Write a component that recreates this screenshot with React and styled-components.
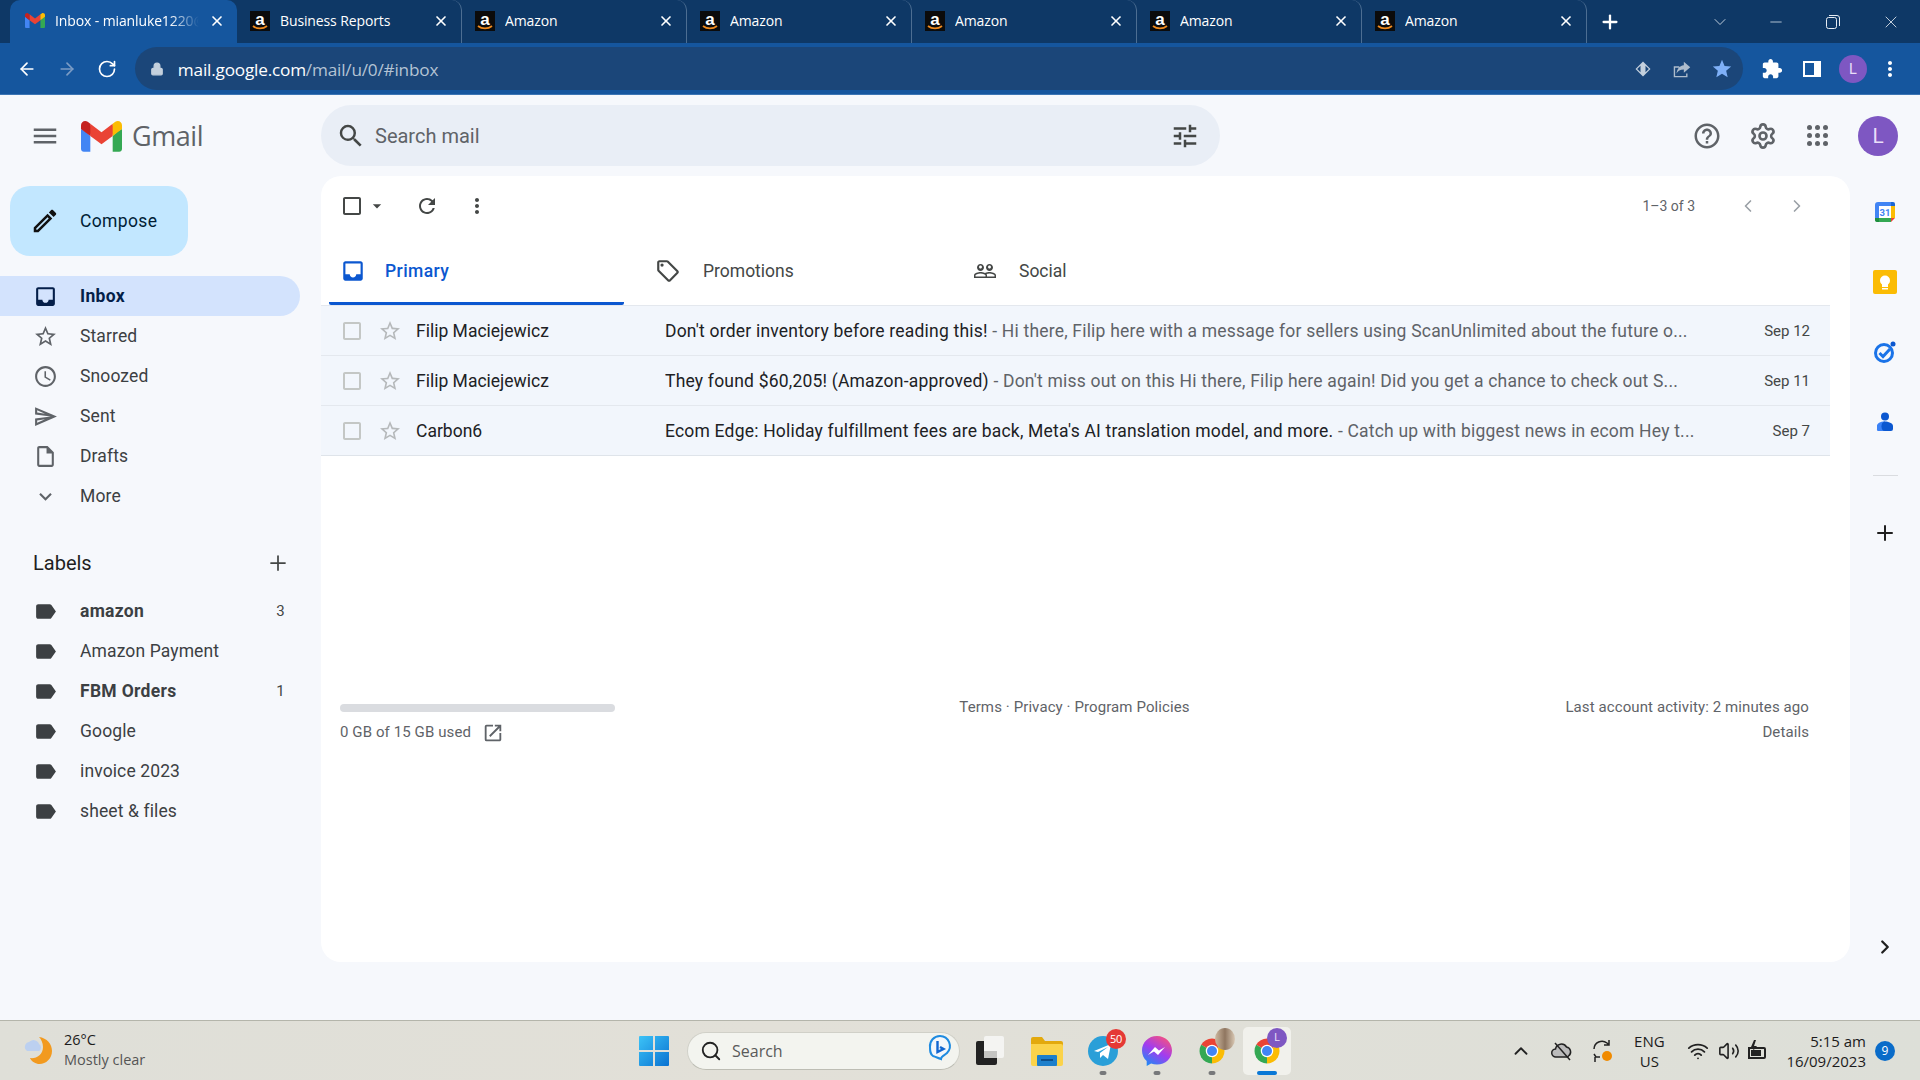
import React from 'react';
import styled, { createGlobalStyle } from 'styled-components';
import { Settings, ChevronLeft, ChevronRight, Plus, X, ArrowLeft, ArrowRight, RotateCw, Lock, Minus, ChevronDown, ChevronUp, Wifi, Volume2, Search as SearchGlyph } from 'lucide-react';

const GlobalStyle = createGlobalStyle`
  html, body { margin: 0; padding: 0; background: #f6f8fc; }
  body { font-family: Roboto, "Liberation Sans", sans-serif; }
  * { box-sizing: border-box; }
`;

const paths = {
  menu: 'M3 18h18v-2H3v2zm0-5h18v-2H3v2zm0-7v2h18V6H3z',
  search: 'M15.5 14h-.79l-.28-.27A6.471 6.471 0 0 0 16 9.5 6.5 6.5 0 1 0 9.5 16c1.61 0 3.09-.59 4.23-1.57l.27.28v.79l5 4.99L20.49 19l-4.99-5zm-6 0C7.01 14 5 11.99 5 9.5S7.01 5 9.5 5 14 7.01 14 9.5 11.99 14 9.5 14z',
  tune: 'M3 17v2h6v-2H3zM3 5v2h10V5H3zm10 16v-2h8v-2h-8v-2h-2v6h2zM7 9v2H3v2h4v2h2V9H7zm14 4v-2H11v2h10zm-6-4h2V7h4V5h-4V3h-2v6z',
  help: 'M11 18h2v-2h-2v2zm1-16C6.48 2 2 6.48 2 12s4.48 10 10 10 10-4.48 10-10S17.52 2 12 2zm0 18c-4.41 0-8-3.59-8-8s3.59-8 8-8 8 3.59 8 8-3.59 8-8 8zm0-14c-2.21 0-4 1.79-4 4h2c0-1.1.9-2 2-2s2 .9 2 2c0 2-3 1.75-3 5h2c0-2.25 3-2.5 3-5 0-2.21-1.79-4-4-4z',
  star: 'M22 9.24l-7.19-.62L12 2 9.19 8.63 2 9.24l5.46 4.73L5.82 21 12 17.27 18.18 21l-1.63-7.03L22 9.24zM12 15.4l-3.76 2.27 1-4.28-3.32-2.88 4.38-.38L12 6.1l1.71 4.04 4.38.38-3.32 2.88 1 4.28L12 15.4z',
  starFill: 'M12 17.27 18.18 21l-1.64-7.03L22 9.24l-7.19-.61L12 2 9.19 8.63 2 9.24l5.46 4.73L5.82 21z',
  clock: 'M11.99 2C6.47 2 2 6.48 2 12s4.47 10 9.99 10C17.52 22 22 17.52 22 12S17.52 2 11.99 2zM12 20c-4.42 0-8-3.58-8-8s3.58-8 8-8 8 3.58 8 8-3.58 8-8 8zm.5-13H11v6l5.25 3.15.75-1.23-4.5-2.67z',
  send: 'M4.01 6.03l7.51 3.22-7.52-1 .01-2.22m7.5 8.72L4 17.97v-2.22l7.51-1M2.01 3L2 10l15 2-15 2 .01 7L23 12 2.01 3z',
  draft: 'M14 2H6c-1.1 0-1.99.9-1.99 2L4 20c0 1.1.89 2 1.99 2H18c1.1 0 2-.9 2-2V8l-6-6zm4 18H6V4h7v5h5v11z',
  expand: 'M16.59 8.59L12 13.17 7.41 8.59 6 10l6 6 6-6z',
  inbox: 'M19 3H5c-1.1 0-2 .9-2 2v14c0 1.1.9 2 2 2h14c1.1 0 2-.9 2-2V5c0-1.1-.9-2-2-2zm0 12h-4c0 1.66-1.34 3-3 3s-3-1.34-3-3H5V5h14v10z',
  label: 'M17.63 5.84C17.27 5.33 16.67 5 16 5L5 5.01C3.9 5.01 3 5.9 3 7v10c0 1.1.9 1.99 2 1.99L16 19c.67 0 1.27-.33 1.63-.84L22 12l-4.37-6.16z',
  tag: 'M21.41 11.58l-9-9C12.05 2.22 11.55 2 11 2H4c-1.1 0-2 .9-2 2v7c0 .55.22 1.05.59 1.42l9 9c.36.36.86.58 1.41.58.55 0 1.05-.22 1.41-.59l7-7c.37-.36.59-.86.59-1.41 0-.55-.23-1.06-.59-1.42zM13 20.01L4 11V4h7v-.01l9 9-7 7.02zM6.5 5A1.5 1.5 0 1 0 6.5 8 1.5 1.5 0 1 0 6.5 5z',
  people: 'M16.5 13c-1.2 0-3.07.34-4.5 1-1.43-.67-3.3-1-4.5-1C5.33 13 1 14.08 1 16.25V19h22v-2.75c0-2.17-4.33-3.25-6.5-3.25zm-4 4.5h-10v-1.25c0-.54 2.56-1.75 5-1.75s5 1.21 5 1.75v1.25zm9 0H14v-1.25c0-.46-.2-.86-.52-1.22.88-.3 1.96-.53 3.02-.53 2.44 0 5 1.21 5 1.75v1.25zM7.5 12c1.93 0 3.5-1.57 3.5-3.5S9.43 5 7.5 5 4 6.57 4 8.5 5.57 12 7.5 12zm0-5.5c.83 0 1.5.67 1.5 1.5s-.67 1.5-1.5 1.5S6 8.83 6 8s.67-1.5 1.5-1.5zm9 5.5c1.93 0 3.5-1.57 3.5-3.5S18.43 5 16.5 5 13 6.57 13 8.5s1.57 3.5 3.5 3.5zm0-5.5c.83 0 1.5.67 1.5 1.5s-.67 1.5-1.5 1.5S15 8.83 15 8s.67-1.5 1.5-1.5z',
  refresh: 'M17.65 6.35A7.958 7.958 0 0 0 12 4c-4.42 0-7.99 3.58-7.99 8s3.57 8 7.99 8c3.73 0 6.84-2.55 7.73-6h-2.08A5.99 5.99 0 0 1 12 18c-3.31 0-6-2.69-6-6s2.69-6 6-6c1.66 0 3.14.69 4.22 1.78L13 11h7V4l-2.35 2.35z',
  more: 'M12 8c1.1 0 2-.9 2-2s-.9-2-2-2-2 .9-2 2 .9 2 2 2zm0 2c-1.1 0-2 .9-2 2s.9 2 2 2 2-.9 2-2-.9-2-2-2zm0 6c-1.1 0-2 .9-2 2s.9 2 2 2 2-.9 2-2-.9-2-2-2z',
  pencil: 'M14.06 9.02l.92.92L5.92 19H5v-.92l9.06-9.06M17.66 3c-.25 0-.51.1-.7.29l-1.83 1.83 3.75 3.75 1.83-1.83c.39-.39.39-1.02 0-1.41l-2.34-2.34c-.2-.2-.45-.29-.71-.29zm-3.6 3.19L3 17.25V21h3.75L17.81 9.94l-3.75-3.75z',
  open: 'M19 19H5V5h7V3H5a2 2 0 0 0-2 2v14a2 2 0 0 0 2 2h14c1.1 0 2-.9 2-2v-7h-2v7zM14 3v2h3.59l-9.83 9.83 1.41 1.41L19 6.41V10h2V3h-7z',
  puzzle: 'M20.5 11H19V7c0-1.1-.9-2-2-2h-4V3.5C13 2.12 11.88 1 10.5 1S8 2.12 8 3.5V5H4c-1.1 0-1.99.9-1.99 2v3.8H3.5c1.49 0 2.7 1.21 2.7 2.7s-1.21 2.7-2.7 2.7H2V20c0 1.1.9 2 2 2h3.8v-1.5c0-1.49 1.21-2.7 2.7-2.7 1.49 0 2.7 1.21 2.7 2.7V22H17c1.1 0 2-.9 2-2v-4h1.5c1.38 0 2.5-1.12 2.5-2.5S21.88 11 20.5 11z',
  box: 'M19 5v14H5V5h14m0-2H5c-1.1 0-2 .9-2 2v14c0 1.1.9 2 2 2h14c1.1 0 2-.9 2-2V5c0-1.1-.9-2-2-2z',
  caret: 'M7 10l5 5 5-5z',
  share: 'M14 4l7 6-7 6v-3.500c-4 0-6.500 1.500-8 4.500.5-4.500 3-8.500 8-9zM3 9h6v1.500H4.500v9h12V17H18v4H3z',
};

const Svg = styled.svg`
  display: block;
  flex: none;
  width: ${p => p.$size || 24}px;
  height: ${p => p.$size || 24}px;
  fill: ${p => p.$color || '#444746'};
`;

const Icon = ({ name, size, color }) => (
  <Svg viewBox="0 0 24 24" $size={size} $color={color}><path d={paths[name]} /></Svg>
);

const Page = styled.div`
  width: 1920px;
  height: 1080px;
  overflow: hidden;
  display: flex;
  flex-direction: column;
  background: #f6f8fc;
`;

/* browser chrome */
const TabStrip = styled.div`
  height: 43px;
  background: #0e3866;
  display: flex;
  align-items: stretch;
  padding-left: 10px;
  flex: none;
`;
const Tab = styled.div`
  width: ${p => (p.$active ? '227px' : '225px')};
  padding: 0 12px 2px ${p => (p.$active ? '15px' : '13px')};
  display: flex;
  align-items: center;
  gap: 10px;
  color: #fff;
  font-family: "Open Sans", Roboto, sans-serif;
  font-size: 14px;
  position: relative;
  border-radius: 10px 10px 0 0;
  background: ${p => (p.$active ? '#15569e' : 'transparent')};
  border-right: ${p => (p.$sep ? '1px solid #4d6e92' : 'none')};
`;
const TabTitle = styled.span`
  flex: 1;
  white-space: nowrap;
  overflow: hidden;
  letter-spacing: -0.12px;
  -webkit-mask-image: ${p => (p.$fade ? 'linear-gradient(90deg, #000 80%, transparent)' : 'none')};
`;
const NewTab = styled.div`
  margin-left: 12px;
  display: flex;
  align-items: center;
`;
const WindowControls = styled.div`
  margin-left: auto;
  display: flex;
  align-items: center;
  gap: 40px;
  padding-right: 19px;
  color: #e6ecf3;
`;
const CaretGap = styled.div`
  margin-right: -3px;
  display: flex;
`;

const Toolbar = styled.div`
  height: 52px;
  background: #15569e;
  border-bottom: 1px solid #3c75b4;
  display: flex;
  align-items: center;
  padding: 0 18px 0 17px;
  flex: none;
`;
const NavButtons = styled.div`
  display: flex;
  align-items: center;
  gap: 20px;
  width: 118px;
`;
const Omnibox = styled.div`
  width: 1610px;
  height: 43px;
  border-radius: 22px;
  background: #1b4679;
  display: flex;
  align-items: center;
  padding: 0 10px 0 15px;
  font-family: "Open Sans", Roboto, sans-serif;
  font-size: 17.2px;
  letter-spacing: -0.2px;
`;
const Host = styled.span`
  color: #fff;
  margin-left: 14px;
  padding-top: 2px;
`;
const Path = styled.span`
  color: #b4c3d4;
`;
const OmniIcons = styled.div`
  margin-left: auto;
  display: flex;
  align-items: center;
  gap: 18px;
`;
const ToolIcons = styled.div`
  margin-left: 18px;
  display: flex;
  align-items: center;
  gap: 19px;
`;
const ToolAvatar = styled.div`
  margin-left: -2px;
`;
const ToolMore = styled.div`
  margin-left: -8px;
`;
const Avatar = styled.div`
  width: ${p => p.$size}px;
  height: ${p => p.$size}px;
  border-radius: 50%;
  background: #7e57c2;
  color: #e9def9;
  display: flex;
  align-items: center;
  justify-content: center;
  font-size: ${p => p.$size * 0.52}px;
  font-family: Roboto, sans-serif;
  flex: none;
`;

/* gmail header */
const Topbar = styled.div`
  height: 81px;
  display: flex;
  align-items: center;
  flex: none;
`;
const Brand = styled.div`
  width: 321px;
  display: flex;
  align-items: center;
  padding-left: 30px;
  flex: none;
`;
const GmailLogoWrap = styled.div`
  margin-left: 21px;
  padding-top: 2px;
`;
const GmailText = styled.span`
  font-family: "Open Sans", Roboto, sans-serif;
  font-size: 27px;
  letter-spacing: -0.45px;
  color: #5f6368;
  margin-left: 10px;
`;
const SearchBar = styled.div`
  width: 899px;
  height: 61px;
  border-radius: 31px;
  background: #e9eef6;
  display: flex;
  align-items: center;
  padding: 0 20px 0 15px;
  font-size: 20px;
  color: #5f6368;
  gap: 9px;
`;
const TuneWrap = styled.div`
  margin-left: auto;
`;
const HeaderActions = styled.div`
  margin-left: auto;
  padding-right: 22px;
  display: flex;
  align-items: center;
  gap: 27px;
`;
const AvatarGap = styled.div`
  margin-left: 0;
`;
const AppsGrid = styled.div`
  display: grid;
  grid-template-columns: repeat(3, 5px);
  gap: 3px;
  padding: 0 3px;
`;
const AppsDot = styled.div`
  width: 5px;
  height: 5px;
  border-radius: 50%;
  background: #5f6368;
`;

const Body = styled.div`
  flex: 1;
  display: flex;
  min-height: 0;
`;

/* sidebar */
const Sidebar = styled.div`
  width: 321px;
  flex: none;
  padding-top: 10px;
`;
const Compose = styled.div`
  width: 178px;
  height: 70px;
  margin-left: 10px;
  border-radius: 20px;
  background: #c2e7ff;
  display: flex;
  align-items: center;
  padding-left: 20px;
  gap: 20px;
  color: #001d35;
  font-size: 17.5px;
  letter-spacing: 0.35px;
`;
const Nav = styled.div`
  margin-top: 20px;
`;
const NavRow = styled.div`
  width: 300px;
  height: 40px;
  border-radius: 0 20px 20px 0;
  background: ${p => (p.$active ? '#d3e3fd' : 'transparent')};
  color: ${p => (p.$active ? '#041e49' : '#3c4043')};
  font-weight: ${p => (p.$bold ? 700 : 400)};
  font-size: 17.5px;
  letter-spacing: ${p => (p.$bold ? '0.3px' : '0.12px')};
  display: flex;
  align-items: center;
  padding: 0 15px 0 33px;
  gap: 22px;
`;
const Count = styled.span`
  margin-left: auto;
  font-size: 15px;
  font-weight: 400;
  color: #444746;
`;
const LabelsHead = styled.div`
  width: 300px;
  margin-top: 27px;
  height: 40px;
  padding: 0 10px 0 33px;
  display: flex;
  align-items: center;
  justify-content: space-between;
  font-size: 20px;
  color: #1f1f1f;
`;
const LabelList = styled.div`
  margin-top: 8px;
`;

/* mail panel */
const Panel = styled.div`
  width: 1529px;
  height: 786px;
  background: #fff;
  border-radius: 20px;
  flex: none;
  display: flex;
  flex-direction: column;
`;
const ListToolbar = styled.div`
  height: 60px;
  flex: none;
  display: flex;
  align-items: center;
  padding: 0 43px 0 19px;
`;
const Caret = styled.div`
  margin-left: 3px;
`;
const RefreshWrap = styled.div`
  margin-left: 28px;
`;
const MoreWrap = styled.div`
  margin-left: 26px;
`;
const Pager = styled.div`
  margin-left: auto;
  display: flex;
  align-items: center;
  font-size: 14px;
  color: #5f6368;
  gap: 43px;
`;
const PagerArrows = styled.div`
  display: flex;
  gap: 29px;
`;
const Tabs = styled.div`
  height: 69px;
  flex: none;
  display: flex;
  padding-left: 8px;
  gap: 18px;
`;
const CategoryTab = styled.div`
  width: ${p => p.$w || 295}px;
  padding: 4px 0 0 ${p => (p.$active ? '11px' : '13px')};
  display: flex;
  align-items: center;
  gap: ${p => (p.$active ? '19px' : '22px')};
  font-size: 17.5px;
  font-weight: ${p => (p.$active ? 500 : 400)};
  letter-spacing: ${p => (p.$active ? '0.4px' : '0')};
  color: ${p => (p.$active ? '#0b57d0' : '#444746')};
  border-bottom: 3px solid ${p => (p.$active ? '#0b57d0' : 'transparent')};
  border-radius: 0 0 2px 2px;
`;
const MailList = styled.div`
  width: 1509px;
  flex: none;
`;
const MailRow = styled.div`
  height: ${p => (p.$last ? '51px' : '50px')};
  background: #f2f6fc;
  border-top: 1px solid #e4e8ee;
  border-bottom: ${p => (p.$last ? '1px solid #dfe4ea' : 'none')};
  display: flex;
  align-items: center;
  padding: 0 20px 0 19px;
  font-size: 17.5px;
  color: #202124;
`;
const StarWrap = styled.div`
  margin-left: 14px;
`;
const Sender = styled.div`
  width: 249px;
  margin-left: 14px;
  flex: none;
`;
const Preview = styled.div`
  width: 1040px;
  white-space: nowrap;
  overflow: hidden;
  flex: none;
  color: #5f6368;
  letter-spacing: 0.2px;
`;
const Subject = styled.span`
  color: #202124;
`;
const MailDate = styled.div`
  margin-left: auto;
  font-size: 15px;
  color: #444746;
`;
const Footer = styled.div`
  margin-top: 239px;
  display: grid;
  grid-template-columns: 1fr auto 1fr;
  padding: 0 41px 0 19px;
  width: 1529px;
  font-size: 15px;
  line-height: 25px;
  letter-spacing: 0.1px;
  color: #5f6368;
`;
const StorageBar = styled.div`
  width: 275px;
  height: 8px;
  border-radius: 4px;
  background: #dadce0;
  margin: 9px 0 8px;
`;
const StorageText = styled.div`
  display: flex;
  align-items: center;
  gap: 11px;
`;
const FooterRight = styled.div`
  text-align: right;
`;
const FooterLinks = styled.div`
  margin-left: 0;
`;

/* add-on rail */
const Rail = styled.div`
  width: 70px;
  flex: none;
  display: flex;
  flex-direction: column;
  align-items: center;
  padding-top: 24px;
`;
const RailItem = styled.div`
  width: 24px;
  height: 24px;
  margin-bottom: 46px;
`;
const RailRule = styled.div`
  width: 25px;
  height: 1px;
  background: #dadce0;
  margin: -5px 0 45px;
`;
const RailChevron = styled.div`
  margin-top: 391px;
`;

/* taskbar */
const Taskbar = styled.div`
  height: 60px;
  flex: none;
  border-top: 1px solid #b4b5ab;
  background: linear-gradient(100deg, #dfdfd8, #e2e0d8 40%, #dddfd8);
  display: flex;
  align-items: center;
  font-family: "Open Sans", Roboto, sans-serif;
  color: #1c1c1c;
`;
const Weather = styled.div`
  width: 639px;
  padding: 0 0 2px 24px;
  display: flex;
  align-items: center;
  gap: 10px;
  flex: none;
  font-size: 14.5px;
  line-height: 20px;
`;
const WeatherSub = styled.div`
  color: #555;
`;
const TaskSearch = styled.div`
  width: 273px;
  height: 38px;
  margin-left: 18px;
  border-radius: 19px;
  background: #f3f4ef;
  border: 1px solid #d0d0c8;
  border-bottom-color: #bdbdb4;
  display: flex;
  align-items: center;
  padding: 0 6px 0 12px;
  gap: 10px;
  font-size: 16px;
  color: #5a5a5a;
`;
const BingWrap = styled.div`
  margin-left: auto;
`;
const TaskIcons = styled.div`
  margin-left: 2px;
  display: flex;
  align-items: center;
`;
const TaskItem = styled.div`
  width: ${p => p.$w || 55}px;
  height: 48px;
  margin-left: ${p => (p.$active ? '4px' : '0')};
  display: flex;
  align-items: center;
  justify-content: center;
  position: relative;
  border-radius: 5px;
  background: ${p => (p.$active ? '#f1f1ec' : 'transparent')};
`;
const RunDot = styled.div`
  position: absolute;
  bottom: 0;
  left: 50%;
  transform: translateX(-50%);
  width: ${p => (p.$active ? '20px' : '7px')};
  height: 4px;
  border-radius: 2px;
  background: ${p => (p.$active ? '#0a78d6' : '#77787a')};
`;
const Badge = styled.div`
  position: absolute;
  top: 2px;
  right: 4px;
  width: 20px;
  height: 20px;
  border-radius: 50%;
  background: #e53935;
  color: #fff;
  font-size: 11px;
  display: flex;
  align-items: center;
  justify-content: center;
  letter-spacing: -0.4px;
`;
const CornerAvatar = styled.div`
  position: absolute;
  top: 1px;
  right: 4px;
`;
const FaceDot = styled.div`
  width: 20px;
  height: 22px;
  border-radius: 50%;
  background: linear-gradient(90deg, #cdb8a0, #8f7660 50%, #d9c8b4);
`;
const Tray = styled.div`
  margin-left: auto;
  display: flex;
  align-items: center;
  padding-right: 25px;
`;
const TrayIcon = styled.div`
  margin-right: ${p => p.$gap || 0}px;
  display: flex;
`;
const Lang = styled.div`
  width: 46px;
  text-align: center;
  font-size: 15px;
  line-height: 20px;
  margin-right: 15px;
`;
const ClockText = styled.div`
  text-align: right;
  font-size: 15px;
  line-height: 20px;
  margin-right: 9px;
`;
const NotifBadge = styled.div`
  width: 20px;
  height: 20px;
  border-radius: 50%;
  background: #0a6cc9;
  color: #fff;
  font-size: 12px;
  display: flex;
  align-items: center;
  justify-content: center;
`;

/* drawings */
const GmailLogo = ({ w = 41 }) => (
  <svg width={w} viewBox="0 0 256 193" style={{ display: 'block', flex: 'none' }}>
    <path fill="#4285F4" d="M58.182 192.05V93.14L27.507 65.077 0 49.504v125.091c0 9.658 7.825 17.455 17.455 17.455h40.727Z" />
    <path fill="#34A853" d="M197.818 192.05h40.727c9.659 0 17.455-7.826 17.455-17.455V49.505l-31.156 17.837-27.026 25.798v98.91Z" />
    <path fill="#EA4335" d="M58.182 93.14l-4.174-38.647 4.174-36.989L128 69.868l69.818-52.364 4.669 34.992-4.669 40.644L128 145.504z" />
    <path fill="#FBBC04" d="M197.818 17.504V93.14L256 49.504V26.231c0-21.585-24.64-33.89-41.89-20.945l-16.292 12.218Z" />
    <path fill="#C5221F" d="M0 49.504l26.759 20.07L58.182 93.14V17.504L41.89 5.286C24.61-7.66 0 4.646 0 26.23v23.273Z" />
  </svg>
);

const AmazonIcon = () => (
  <svg width="20" height="20" viewBox="0 0 20 20" style={{ flex: 'none' }}>
    <rect width="20" height="20" fill="#0b0b0b" />
    <text x="10" y="13.500" textAnchor="middle" fontSize="17" fontWeight="700" fontFamily="Liberation Sans, sans-serif" fill="#fff">a</text>
    <path d="M3 15c4 3.200 10 3.200 14 0" stroke="#f08a1d" strokeWidth="1.800" fill="none" />
  </svg>
);

const ChromeLogo = ({ size = 30 }) => (
  <svg width={size} height={size} viewBox="0 0 48 48">
    <path fill="#ea4335" d="M24 24 6.680 14A20 20 0 0 1 41.320 14Z" />
    <path fill="#34a853" d="M24 24 24 44A20 20 0 0 1 6.680 14Z" />
    <path fill="#fbbc04" d="M24 24 41.320 14A20 20 0 0 1 24 44Z" />
    <circle cx="24" cy="24" r="10" fill="#fff" />
    <circle cx="24" cy="24" r="8" fill="#4285f4" />
  </svg>
);

const CalendarIcon = () => (
  <svg width="24" height="24" viewBox="0 0 24 24">
    <path fill="#fff" d="M5 5h14v14H5z" />
    <path fill="#4285f4" d="M2 5a3 3 0 0 1 3-3h13v4H6v12H2z" />
    <path fill="#1a66d4" d="M18 2h2a2 2 0 0 1 2 2v2h-4z" />
    <path fill="#fbbc04" d="M18 6h4v12h-4z" />
    <path fill="#34a853" d="M6 18h12v4H5a3 3 0 0 1-3-3v-1z" />
    <path fill="#1e8e3e" d="M2 18h4v4H4a2 2 0 0 1-2-2z" />
    <path fill="#ea4335" d="M18 18h4l-4 4z" />
    <text x="12" y="16" textAnchor="middle" fontSize="9.500" fontWeight="700" fontFamily="Roboto, sans-serif" fill="#4285f4">31</text>
  </svg>
);
const KeepIcon = () => (
  <svg width="24" height="24" viewBox="0 0 24 24">
    <rect width="24" height="24" rx="2" fill="#fbbc04" />
    <circle cx="12" cy="10.500" r="5" fill="#fff" />
    <rect x="9" y="14" width="6" height="3" fill="#fff" />
    <rect x="9" y="18" width="6" height="1.500" fill="#fff" />
  </svg>
);
const TasksIcon = () => (
  <svg width="24" height="24" viewBox="0 0 24 24">
    <circle cx="11" cy="13" r="8.500" fill="none" stroke="#1a73e8" strokeWidth="3" />
    <path d="M6.500 13l3.500 3.500 7-7.500" fill="none" stroke="#1a73e8" strokeWidth="3" />
    <circle cx="20" cy="4" r="2.500" fill="#0b57d0" />
  </svg>
);
const ContactsIcon = () => (
  <svg width="24" height="24" viewBox="0 0 24 24">
    <circle cx="12" cy="6.500" r="4" fill="#0b57d0" />
    <path fill="#3b82f6" d="M4 19v-3c0-2.500 3-4.500 8-4.500v9.500H5.500A1.500 1.500 0 0 1 4 19z" />
    <path fill="#0b57d0" d="M12 11.500c3 0 8 1.500 8 4.500v3a2 2 0 0 1-2 2h-6c-2.500 0-3.500-2-3.500-4.500s1-5 3.500-5z" />
  </svg>
);
const WeatherIcon = () => (
  <svg width="30" height="32" viewBox="0 0 30 32" style={{ flex: 'none' }}>
    <path fill="#f29a1f" d="M15 3c8 1 13 7 13 14 0 8-7 14-14 13C10 29 7 27 6 24c6 1 13-3 13-11 0-4-2-8-4-10z" />
    <path fill="#bcd0f0" d="M3 17a5 5 0 0 1 2-9 6 6 0 0 1 10 2 4 4 0 0 1 0 7z" />
  </svg>
);
const WinLogo = () => (
  <svg width="30" height="30" viewBox="0 0 30 30" style={{ flex: 'none' }}>
    <defs>
      <linearGradient id="wl" x1="0" y1="0" x2="1" y2="1">
        <stop offset="0" stopColor="#3cc3f7" /><stop offset="1" stopColor="#0a72d1" />
      </linearGradient>
    </defs>
    <path fill="url(#wl)" d="M0 1a1 1 0 0 1 1-1h13v14H0zM16 0h13a1 1 0 0 1 1 1v13H16zM0 16h14v14H1a1 1 0 0 1-1-1zM16 16h14v13a1 1 0 0 1-1 1H16z" />
  </svg>
);
const BingIcon = () => (
  <svg width="26" height="30" viewBox="0 0 26 30">
    <path d="M13 3a10 10 0 0 1 7 17c-2 2-6 3-6 6-3-1-5-2-8-3-3-2-3-5-3-9A10 10 0 0 1 13 3z" fill="#f4f7fb" stroke="#1f8be0" strokeWidth="2" />
    <path d="M10.500 8v11l6-3-3.500-2" fill="none" stroke="#1266d0" strokeWidth="2.400" />
  </svg>
);
const TaskViewIcon = () => (
  <svg width="28" height="30" viewBox="0 0 28 30">
    <rect x="0" y="5" width="21" height="24" rx="2" fill="#222" />
    <rect x="8" y="0" width="20" height="22" rx="2" fill="#f4f4f2" />
    <rect x="8" y="15" width="13" height="7" fill="#c4c4c2" />
  </svg>
);
const FolderIcon = () => (
  <svg width="32" height="30" viewBox="0 0 32 30">
    <path fill="#e3a90d" d="M0 3a2 2 0 0 1 2-2h9l3 4h16a2 2 0 0 1 2 2v4H0z" />
    <path fill="#fbd34a" d="M0 8h30a2 2 0 0 1 2 2v18a2 2 0 0 1-2 2H2a2 2 0 0 1-2-2z" />
    <rect x="6" y="19" width="20" height="11" rx="1" fill="#1d7fcb" />
    <rect x="10" y="23" width="12" height="2" fill="#0d4f8b" />
  </svg>
);
const TelegramIcon = () => (
  <svg width="30" height="30" viewBox="0 0 30 30">
    <circle cx="15" cy="15" r="15" fill="#2a9fd8" />
    <path fill="#fff" d="M6 15l17-7-3 15-5-4-3 3v-5l8-6-10 5z" />
  </svg>
);
const MessengerIcon = () => (
  <svg width="32" height="32" viewBox="0 0 32 32">
    <defs>
      <linearGradient id="ms" x1="0.2" y1="1" x2="0.8" y2="0">
        <stop offset="0" stopColor="#1b8cf5" /><stop offset="0.5" stopColor="#a13cf0" /><stop offset="1" stopColor="#f9527a" />
      </linearGradient>
    </defs>
    <path fill="url(#ms)" d="M16 1C7.500 1 1 7.200 1 15.500c0 4.300 1.800 8 4.700 10.600V31l4.400-2.400c1.800.6 3.800.9 5.900.9 8.500 0 15-6.200 15-14S24.500 1 16 1z" />
    <path fill="#fff" d="M7 20l7-8 4 3.500 6-3.500-7 8-4-3.500z" />
  </svg>
);
const CloudOffIcon = () => (
  <svg width="24" height="24" viewBox="0 0 24 24" fill="none" stroke="#222" strokeWidth="1.500">
    <path d="M6 18a4 4 0 0 1-.500-8 6 6 0 0 1 11-2 5 5 0 0 1 2 9l-1 1z" fill="#bbb" />
    <path d="M5 4l15 17" />
  </svg>
);
const SyncIcon = () => (
  <svg width="24" height="26" viewBox="0 0 24 26" fill="none" stroke="#222" strokeWidth="1.500">
    <path d="M4 11a8 8 0 0 1 13-6l2 2M19 2v5h-5M4 16l2 3h4M5 24v-5" />
    <circle cx="17" cy="18" r="5" fill="#f08a00" stroke="none" />
  </svg>
);
const BatteryIcon = () => (
  <svg width="22" height="22" viewBox="0 0 22 22" fill="#222">
    <path d="M2 7h16a2 2 0 0 1 2 2v8a2 2 0 0 1-2 2H2z M4 9v8h14V9z" fillRule="evenodd" />
    <rect x="5" y="10" width="10" height="6" />
    <path d="M8 0l2 0-2 6h3l-4 5 1-4H5z" />
  </svg>
);
const LensIcon = () => (
  <svg width="20" height="20" viewBox="0 0 24 24" fill="#c4d0dd">
    <path d="M12 3l9 9-9 9-9-9zM9 8l-4 4 4 4z M15 8v8l4-4z" fillRule="evenodd" />
  </svg>
);
const SidePanelIcon = () => (
  <svg width="20" height="20" viewBox="0 0 20 20">
    <path fill="#fff" fillRule="evenodd" d="M1 2h18v16H1zM3 4v12h9V4z" />
  </svg>
);
const Restore = () => (
  <svg width="16" height="16" viewBox="0 0 16 16" fill="none" stroke="#e6ecf3" strokeWidth="1">
    <rect x="1.500" y="3.500" width="10" height="11" rx="2" />
    <path d="M4 1.500h8a2.500 2.500 0 0 1 2.500 2.500v8" />
  </svg>
);
const AppsDots = () => (
  <AppsGrid>
    {Array.from({ length: 9 }).map((_, i) => <AppsDot key={i} />)}
  </AppsGrid>
);

const labels = [
  { name: 'amazon', bold: true, count: 3 },
  { name: 'Amazon Payment' },
  { name: 'FBM Orders', bold: true, count: 1 },
  { name: 'Google' },
  { name: 'invoice 2023' },
  { name: 'sheet & files' },
];

const navItems = [
  { name: 'Starred', icon: 'star' },
  { name: 'Snoozed', icon: 'clock' },
  { name: 'Sent', icon: 'send' },
  { name: 'Drafts', icon: 'draft' },
  { name: 'More', icon: 'expand' },
];

const mails = [
  { from: 'Filip Maciejewicz', subject: "Don't order inventory before reading this!", snippet: ' - Hi there, Filip here with a message for sellers using ScanUnlimited about the future o...', date: 'Sep 12' },
  { from: 'Filip Maciejewicz', subject: 'They found $60,205! (Amazon-approved)', snippet: " - Don't miss out on this Hi there, Filip here again! Did you get a chance to check out S...", date: 'Sep 11' },
  { from: 'Carbon6', subject: "Ecom Edge: Holiday fulfillment fees are back, Meta's AI translation model, and more.", snippet: ' - Catch up with biggest news in ecom Hey t...', date: 'Sep 7' },
];

const amazonTabs = ['Business Reports', 'Amazon', 'Amazon', 'Amazon', 'Amazon', 'Amazon'];

export default function App() {
  return (
    <Page>
      <GlobalStyle />
      <TabStrip>
        <Tab $active>
          <GmailLogo w={20} />
          <TabTitle $fade>Inbox - mianluke1220@gmail.com</TabTitle>
          <X size={16} color="#fff" strokeWidth={2.5} />
        </Tab>
        {amazonTabs.map((title, i) => (
          <Tab key={i} $sep>
            <AmazonIcon />
            <TabTitle>{title}</TabTitle>
            <X size={16} color="#fff" strokeWidth={2.5} />
          </Tab>
        ))}
        <NewTab><Plus size={22} color="#fff" strokeWidth={2.5} /></NewTab>
        <WindowControls>
          <CaretGap><ChevronDown size={20} color="#dfe7ef" strokeWidth={1} /></CaretGap>
          <Minus size={18} color="#e6ecf3" strokeWidth={1} />
          <Restore />
          <X size={20} color="#e6ecf3" strokeWidth={1} />
        </WindowControls>
      </TabStrip>

      <Toolbar>
        <NavButtons>
          <ArrowLeft size={20} color="#fff" strokeWidth={2} />
          <ArrowRight size={20} color="#7b9cc5" strokeWidth={2} />
          <RotateCw size={20} color="#fff" strokeWidth={2} />
        </NavButtons>
        <Omnibox>
          <Lock size={14} color="#c4d0dd" fill="#c4d0dd" />
          <Host>mail.google.com<Path>/mail/u/0/#inbox</Path></Host>
          <OmniIcons>
            <LensIcon />
            <Icon name="share" size={22} color="#aebccc" />
            <Icon name="starFill" size={22} color="#7fb0f7" />
          </OmniIcons>
        </Omnibox>
        <ToolIcons>
          <Icon name="puzzle" size={22} color="#fff" />
          <SidePanelIcon />
          <ToolAvatar><Avatar $size={28}>L</Avatar></ToolAvatar>
          <ToolMore><Icon name="more" size={24} color="#fff" /></ToolMore>
        </ToolIcons>
      </Toolbar>

      <Topbar>
        <Brand>
          <Icon name="menu" size={30} color="#5f6368" />
          <GmailLogoWrap><GmailLogo /></GmailLogoWrap>
          <GmailText>Gmail</GmailText>
        </Brand>
        <SearchBar>
          <Icon name="search" size={30} color="#444746" />
          Search mail
          <TuneWrap><Icon name="tune" size={30} color="#444746" /></TuneWrap>
        </SearchBar>
        <HeaderActions>
          <Icon name="help" size={30} color="#5f6368" />
          <Settings size={28} color="#5f6368" strokeWidth={2.25} />
          <AppsDots />
          <AvatarGap><Avatar $size={40}>L</Avatar></AvatarGap>
        </HeaderActions>
      </Topbar>

      <Body>
        <Sidebar>
          <Compose>
            <Icon name="pencil" size={30} color="#111" />
            Compose
          </Compose>
          <Nav>
            <NavRow $active $bold>
              <Icon name="inbox" size={25} color="#041e49" />
              Inbox
            </NavRow>
            {navItems.map(n => (
              <NavRow key={n.name}>
                <Icon name={n.icon} size={25} color="#5f6368" />
                {n.name}
              </NavRow>
            ))}
          </Nav>
          <LabelsHead>Labels<Plus size={24} color="#444746" strokeWidth={1.75} /></LabelsHead>
          <LabelList>
            {labels.map(l => (
              <NavRow key={l.name} $bold={l.bold}>
                <Icon name="label" size={25} color="#3c4043" />
                {l.name}
                {l.count && <Count>{l.count}</Count>}
              </NavRow>
            ))}
          </LabelList>
        </Sidebar>

        <Panel>
          <ListToolbar>
            <Icon name="box" size={24} color="#444746" />
            <Caret><Icon name="caret" size={20} color="#444746" /></Caret>
            <RefreshWrap><Icon name="refresh" size={24} color="#444746" /></RefreshWrap>
            <MoreWrap><Icon name="more" size={24} color="#444746" /></MoreWrap>
            <Pager>
              1–3 of 3
              <PagerArrows>
                <ChevronLeft size={20} color="#9aa0a6" />
                <ChevronRight size={20} color="#9aa0a6" />
              </PagerArrows>
            </Pager>
          </ListToolbar>
          <Tabs>
            <CategoryTab $active><Icon name="inbox" size={26} color="#0b57d0" />Primary</CategoryTab>
            <CategoryTab $w={300}><Icon name="tag" size={26} color="#444746" />Promotions</CategoryTab>
            <CategoryTab><Icon name="people" size={24} color="#444746" />Social</CategoryTab>
          </Tabs>
          <MailList>
            {mails.map((m, i) => (
              <MailRow key={i} $last={i === mails.length - 1}>
                <Icon name="box" size={24} color="#c4c7c5" />
                <StarWrap><Icon name="star" size={24} color="#b6b9bb" /></StarWrap>
                <Sender>{m.from}</Sender>
                <Preview><Subject>{m.subject}</Subject>{m.snippet}</Preview>
                <MailDate>{m.date}</MailDate>
              </MailRow>
            ))}
          </MailList>
          <Footer>
            <div>
              <StorageBar />
              <StorageText>0 GB of 15 GB used <Icon name="open" size={22} color="#5f6368" /></StorageText>
            </div>
            <FooterLinks>Terms · Privacy · Program Policies</FooterLinks>
            <FooterRight>Last account activity: 2 minutes ago<br />Details</FooterRight>
          </Footer>
        </Panel>

        <Rail>
          <RailItem><CalendarIcon /></RailItem>
          <RailItem><KeepIcon /></RailItem>
          <RailItem><TasksIcon /></RailItem>
          <RailItem><ContactsIcon /></RailItem>
          <RailRule />
          <Plus size={24} color="#1f1f1f" strokeWidth={2} />
          <RailChevron><ChevronRight size={22} color="#1f1f1f" strokeWidth={2.5} /></RailChevron>
        </Rail>
      </Body>

      <Taskbar>
        <Weather>
          <WeatherIcon />
          <div>
            26°C
            <WeatherSub>Mostly clear</WeatherSub>
          </div>
        </Weather>
        <WinLogo />
        <TaskSearch>
          <SearchGlyph size={22} color="#222" strokeWidth={2} />
          Search
          <BingWrap><BingIcon /></BingWrap>
        </TaskSearch>
        <TaskIcons>
          <TaskItem $w={56}><TaskViewIcon /></TaskItem>
          <TaskItem $w={57}><FolderIcon /></TaskItem>
          <TaskItem $w={55}><TelegramIcon /><Badge>50</Badge><RunDot /></TaskItem>
          <TaskItem $w={54}><MessengerIcon /><RunDot /></TaskItem>
          <TaskItem $w={55}><ChromeLogo /><CornerAvatar><FaceDot /></CornerAvatar><RunDot /></TaskItem>
          <TaskItem $w={48} $active><ChromeLogo /><CornerAvatar><Avatar $size={20}>L</Avatar></CornerAvatar><RunDot $active /></TaskItem>
        </TaskIcons>
        <Tray>
          <TrayIcon $gap={18}><ChevronUp size={22} color="#222" strokeWidth={2} /></TrayIcon>
          <TrayIcon $gap={16}><CloudOffIcon /></TrayIcon>
          <TrayIcon $gap={12}><SyncIcon /></TrayIcon>
          <Lang>ENG<br />US</Lang>
          <TrayIcon $gap={9}><Wifi size={22} color="#222" strokeWidth={2} /></TrayIcon>
          <TrayIcon $gap={6}><Volume2 size={22} color="#222" strokeWidth={1.75} /></TrayIcon>
          <TrayIcon $gap={18}><BatteryIcon /></TrayIcon>
          <ClockText>5:15 am<br />16/09/2023</ClockText>
          <NotifBadge>9</NotifBadge>
        </Tray>
      </Taskbar>
    </Page>
  );
}
